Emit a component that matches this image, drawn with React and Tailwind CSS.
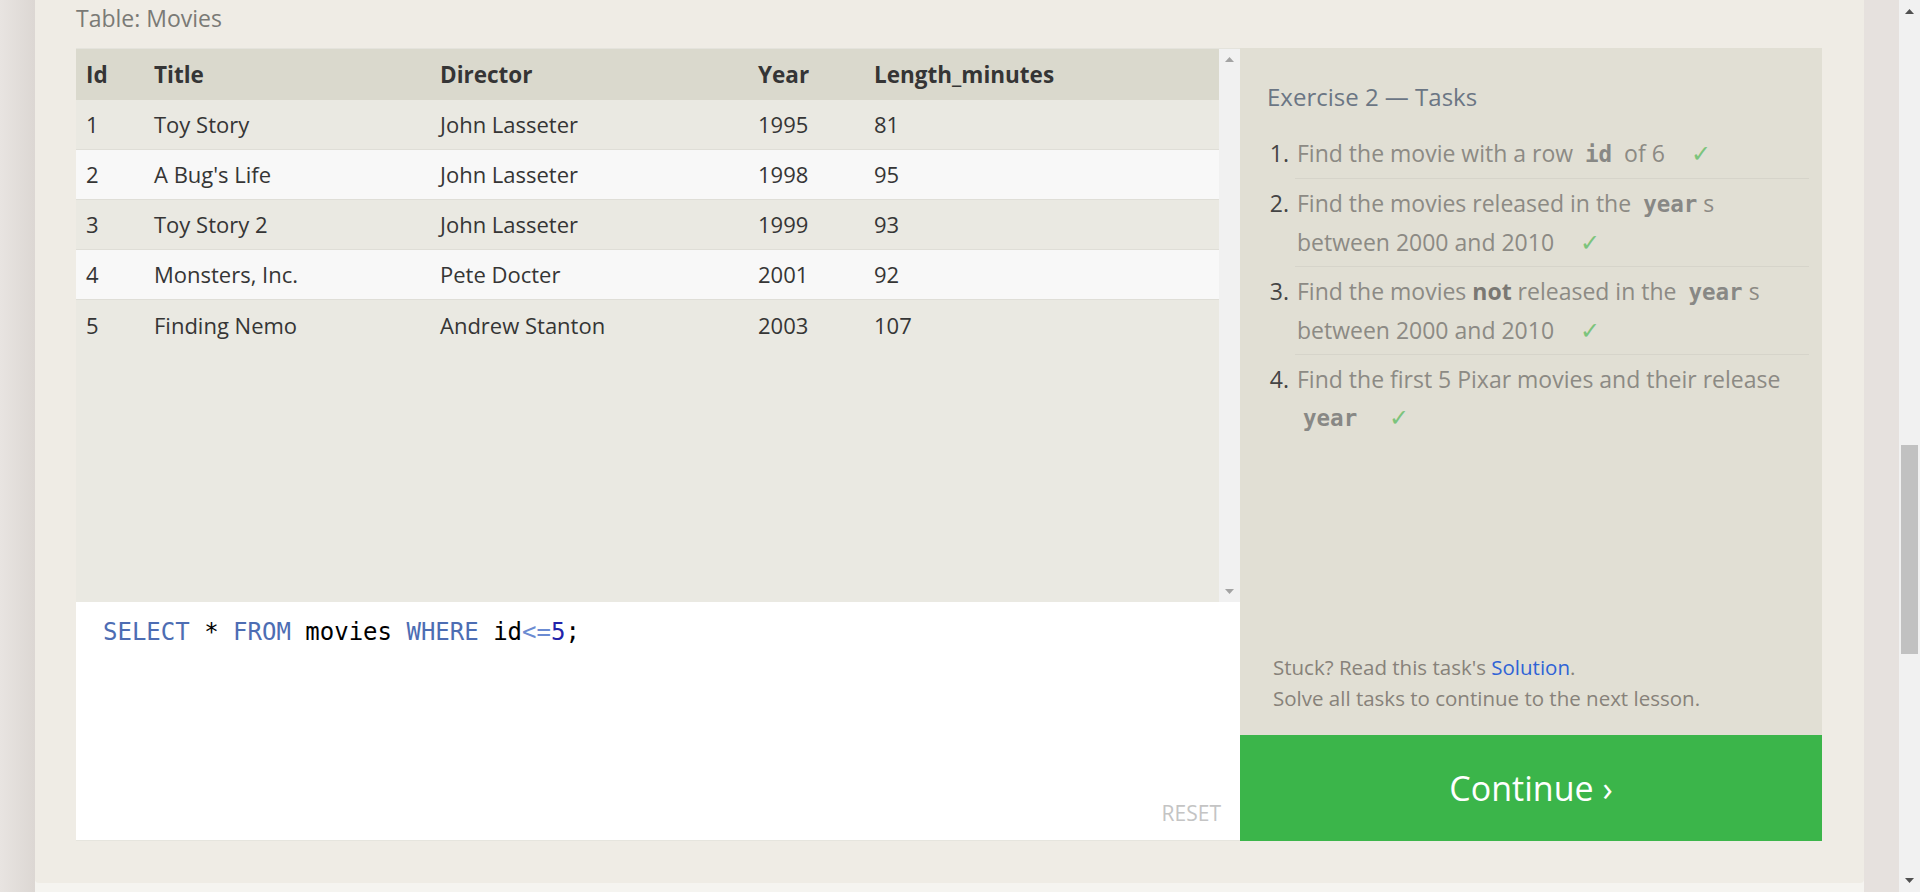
import React from "react";

const movies = [
  [1, "Toy Story", "John Lasseter", 1995, 81],
  [2, "A Bug's Life", "John Lasseter", 1998, 95],
  [3, "Toy Story 2", "John Lasseter", 1999, 93],
  [4, "Monsters, Inc.", "Pete Docter", 2001, 92],
  [5, "Finding Nemo", "Andrew Stanton", 2003, 107],
];

const cols = "grid grid-cols-[68px_286px_318px_116px_1fr]";

const Code = ({ children }) => (
  <code className="px-[6px] font-['DejaVu_Sans_Mono',monospace] text-[22.5px] font-bold text-[#888885]">
    {children}
  </code>
);

const Check = () => <span className="ml-[20px] text-[24px] text-[#7cc47c]">✓</span>;

const Arrow = ({ up, color }) => (
  <svg width="9" height="5" viewBox="0 0 9 5">
    <path d={up ? "M0 5 L4.5 0 L9 5 Z" : "M0 0 L4.5 5 L9 0 Z"} fill={color} />
  </svg>
);

const App = () => {
  return (
    <div className="flex h-screen overflow-hidden bg-[#e6e2de] font-['Open_Sans',sans-serif]">
      {/* left shadow strip */}
      <div className="w-[35px] shrink-0 bg-gradient-to-r from-[#e8e4e1] to-[#dcd7d3]" />

      <div className="flex w-[1829px] shrink-0 flex-col bg-[#f5f4f0]">
        <main className="h-[883px] rounded-b bg-[#efece5] pl-[41px] pr-[42px]">
          <div className="h-[48px] text-[23px] leading-[36px] text-[#7a7a76]">Table: Movies</div>

          <div className="flex h-[793px]">
            {/* left: table + editor */}
            <div className="flex w-[1164px] flex-col bg-white">
              <div className="flex h-[554px] border-t border-[#e4e3dc] bg-[#eae9e2]">
                <div className="flex-1 text-[22px] text-[#353535]">
                  <div className={`${cols} h-[51px] items-center bg-[#dad9cd] text-[22.5px] font-bold`}>
                    <div className="pl-[10px]">Id</div>
                    <div className="pl-[10px]">Title</div>
                    <div className="pl-[10px]">Director</div>
                    <div className="pl-[10px]">Year</div>
                    <div className="pl-[10px]">Length_minutes</div>
                  </div>
                  {movies.map((m, i) => (
                    <div
                      key={m[0]}
                      className={`${cols} h-[50px] items-center ${
                        i % 2 ? "bg-[#f8f8f8]" : "bg-[#eae9e2]"
                      } ${i < 4 ? "border-b border-[#dfded7]" : ""}`}
                    >
                      {m.map((v, j) => (
                        <div key={j} className="pl-[10px]">
                          {v}
                        </div>
                      ))}
                    </div>
                  ))}
                </div>
                {/* inner scrollbar */}
                <div className="flex w-[21px] flex-col items-center justify-between bg-[#f1f1f1] py-[8px]">
                  <Arrow up color="#a3a3a3" />
                  <Arrow color="#a3a3a3" />
                </div>
              </div>

              {/* editor */}
              <div className="flex flex-1 flex-col justify-between border-b border-[#e6e5de] pl-[27px] pr-[19px] pt-[14px] pb-[12px]">
                <div className="font-['DejaVu_Sans_Mono',monospace] text-[24px] leading-[32px] text-black">
                  <span className="text-[#4d6db3]">SELECT</span> *{" "}
                  <span className="text-[#4d6db3]">FROM</span> movies{" "}
                  <span className="text-[#4d6db3]">WHERE</span> id
                  <span className="text-[#6b8bd2]">&lt;=</span>
                  <span className="text-[#2222aa]">5</span>;
                </div>
                <div className="self-end text-[21px] leading-[30px] text-[#c4c4c4]">RESET</div>
              </div>
            </div>

            {/* right: tasks */}
            <div className="flex w-[582px] flex-col bg-[#e1dfd4]">
              <div className="flex flex-1 flex-col pl-[27px] pr-[13px] pt-[33px]">
                <h2 className="text-[24px] leading-[32px] text-[#6b7684]">Exercise 2 — Tasks</h2>
                <ol className="mt-[15px] list-decimal pl-[28px] text-[23px] leading-[37px] text-[#8c8a84] marker:text-[#444]">
                  <li className="border-b border-[#d6d4ca] pt-[6px] pb-[5px] pl-[2px]">
                    Find the movie with a row <Code>id</Code> of 6 <Check />
                  </li>
                  <li className="border-b border-[#d6d4ca] pt-[6px] pb-[5px] pl-[2px]">
                    Find the movies released in the <Code>year</Code>s
                    <br />
                    between 2000 and 2010 <Check />
                  </li>
                  <li className="border-b border-[#d6d4ca] pt-[6px] pb-[5px] pl-[2px]">
                    Find the movies <b className="text-[#7a7873]">not</b> released in the <Code>year</Code>s
                    <br />
                    between 2000 and 2010 <Check />
                  </li>
                  <li className="pt-[6px] pb-[5px] pl-[2px]">
                    Find the first 5 Pixar movies and their release
                    <br />
                    <Code>year</Code> <Check />
                  </li>
                </ol>
                <div className="mt-auto pb-[21px] pl-[6px] text-[20.5px] leading-[31px] text-[#87827a]">
                  <p>
                    Stuck? Read this task's <span className="text-[#2f63d6]">Solution</span>.
                  </p>
                  <p>Solve all tasks to continue to the next lesson.</p>
                </div>
              </div>
              <button className="flex h-[106px] items-center justify-center bg-[#3bb54a] text-[34px] text-white">
                Continue ›
              </button>
            </div>
          </div>
        </main>
      </div>

      {/* right shadow strip */}
      <div className="w-[35px] shrink-0 bg-[#e6e1de]" />

      {/* browser scrollbar */}
      <div className="flex w-[21px] shrink-0 flex-col items-center bg-[#f1f1f1] pt-[9px] pb-[9px]">
        <Arrow up color="#505050" />
        <div className="mt-[431px] h-[209px] w-[17px] bg-[#c1c1c1]" />
        <div className="flex-1" />
        <Arrow color="#505050" />
      </div>
    </div>
  );
};

export default App;
